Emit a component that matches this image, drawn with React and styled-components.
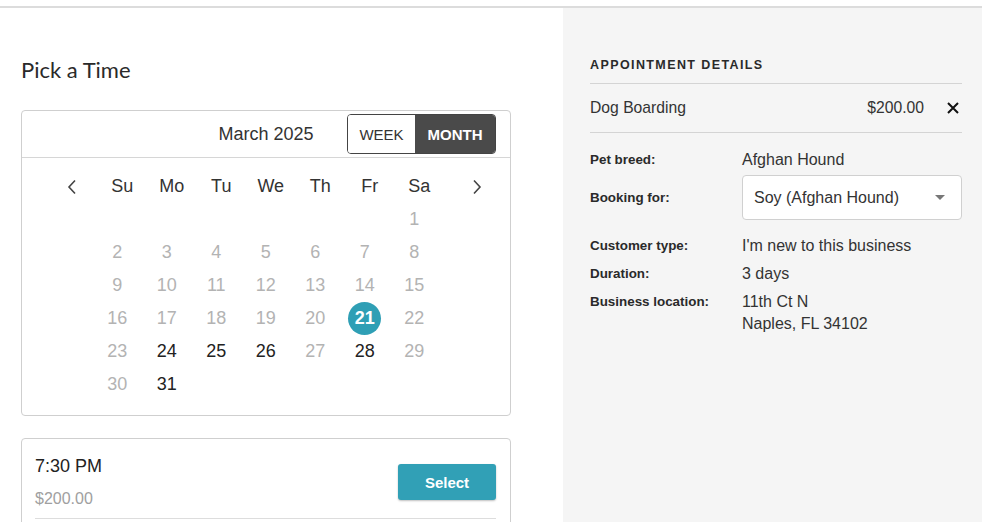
import React from 'react';
import styled, { createGlobalStyle } from 'styled-components';

const GlobalStyle = createGlobalStyle`
  html, body {
    margin: 0;
    padding: 0;
    background: #fff;
    font-family: 'Liberation Sans', Arial, sans-serif;
    color: #333;
  }
`;

const Page = styled.div`
  padding-top: 6px;
  height: 522px;
  box-sizing: border-box;
  overflow: hidden;
`;

const Shell = styled.div`
  display: grid;
  grid-template-columns: 563px 1fr;
  border-top: 2px solid #dcdcdc;
  height: 100%;
`;

const Main = styled.section`
  padding: 48px 52px 0 21px;
  overflow: hidden;
`;

const Title = styled.h1`
  margin: 0 0 26px;
  font-family: Lato, 'Open Sans', sans-serif;
  font-weight: 400;
  font-size: 22px;
  line-height: 28px;
  color: #2a2a2a;
`;

const Calendar = styled.div`
  border: 1px solid #cfcfcf;
  border-radius: 4px;
`;

const CalHeader = styled.div`
  position: relative;
  height: 46px;
  display: flex;
  align-items: center;
  justify-content: center;
  border-bottom: 1px solid #d6d6d6;
`;

const MonthLabel = styled.div`
  font-size: 18px;
  color: #333;
`;

const Toggle = styled.div`
  position: absolute;
  right: 14px;
  top: 3px;
  display: flex;
  height: 40px;
  box-sizing: border-box;
  border: 1px solid #444;
  border-radius: 4px;
  overflow: hidden;
`;

const ToggleBtn = styled.div`
  width: ${(p) => p.$w}px;
  display: flex;
  align-items: center;
  justify-content: center;
  font-size: 15px;
  font-weight: ${(p) => (p.$active ? 700 : 400)};
  color: ${(p) => (p.$active ? '#fff' : '#333')};
  background: ${(p) => (p.$active ? '#4a4a4a' : '#fff')};
`;

const Grid = styled.div`
  display: grid;
  grid-template-columns: repeat(9, 49.5px);
  grid-auto-rows: 33px;
  padding: 12px 0 14px 21px;
`;

const Cell = styled.div`
  display: flex;
  align-items: center;
  justify-content: center;
  font-size: 18px;
  color: ${(p) => (p.$muted ? '#b3b3b3' : '#222')};
`;

const WeekdayCell = styled(Cell)`
  padding-left: 10px;
  color: #333;
`;

const Nav = styled.div`
  display: flex;
  align-items: center;
  justify-content: ${(p) => (p.$next ? 'flex-end' : 'center')};
  padding-left: ${(p) => (p.$next ? '0' : '8px')};
  padding-right: ${(p) => (p.$next ? '7px' : '0')};
  color: #444;
`;

const Selected = styled.span`
  width: 33px;
  height: 33px;
  border-radius: 50%;
  background: #2f9fb5;
  color: #fff;
  font-weight: 700;
  display: flex;
  align-items: center;
  justify-content: center;
`;

const SlotCard = styled.div`
  margin-top: 22px;
  border: 1px solid #cfcfcf;
  border-radius: 4px;
  padding: 17px 14px 0 13px;
  height: 120px;
`;

const SlotRow = styled.div`
  display: flex;
  align-items: center;
  justify-content: space-between;
  padding-bottom: 10px;
  border-bottom: 1px solid #ddd;
`;

const SlotTime = styled.div`
  font-size: 18px;
  line-height: 20px;
  color: #222;
`;

const SlotPrice = styled.div`
  margin-top: 14px;
  font-size: 16px;
  line-height: 18px;
  color: #a0a0a0;
`;

const SelectButton = styled.button`
  width: 98px;
  height: 36px;
  border: none;
  border-radius: 3px;
  background: #31a0b6;
  color: #fff;
  font-family: inherit;
  font-size: 15px;
  font-weight: 700;
  box-shadow: 0 1px 2px rgba(0, 0, 0, 0.25);
`;

const Aside = styled.aside`
  background: #f5f5f5;
  padding: 49px 20px 0 27px;
`;

const AsideTitle = styled.h2`
  margin: 0;
  padding-bottom: 10px;
  border-bottom: 1px solid #d4d4d4;
  font-size: 12.5px;
  line-height: 16px;
  font-weight: 700;
  letter-spacing: 1.4px;
  color: #2a2a2a;
`;

const ServiceRow = styled.div`
  height: 48px;
  display: flex;
  align-items: center;
  border-bottom: 1px solid #d4d4d4;
  font-size: 15.7px;
  color: #333;
`;

const ServiceName = styled.span`
  flex: 1;
`;

const Close = styled.span`
  margin-left: 23px;
  margin-right: 3px;
  display: flex;
  color: #111;
`;

const Details = styled.div`
  padding-top: 16px;
`;

const DetailRow = styled.div`
  display: grid;
  grid-template-columns: 152px 1fr;
  align-items: ${(p) => (p.$center ? 'center' : 'start')};
  margin-top: ${(p) => p.$gap || 0}px;
`;

const Label = styled.div`
  font-size: 13.4px;
  font-weight: 700;
  line-height: 22px;
  color: #2a2a2a;
`;

const Value = styled.div`
  font-size: 16px;
  line-height: 22px;
  color: #333;
`;

const SelectBox = styled.div`
  height: 45px;
  box-sizing: border-box;
  background: #fff;
  border: 1px solid #d0d0d0;
  border-radius: 4px;
  display: flex;
  align-items: center;
  justify-content: space-between;
  padding: 0 16px 0 11px;
  font-size: 16px;
  color: #333;
`;

const Chevron = ({ dir }) => (
  <svg width='10' height='16' viewBox='0 0 10 16'>
    <polyline
      points={dir === 'left' ? '8,1.5 2,8 8,14.5' : '2,1.5 8,8 2,14.5'}
      fill='none'
      stroke='currentColor'
      strokeWidth='1.6'
    />
  </svg>
);

const weekdays = ['Su', 'Mo', 'Tu', 'We', 'Th', 'Fr', 'Sa'];
const openDays = [21, 24, 25, 26, 28, 31];

const days = [];
for (let i = 0; i < 6; i++) days.push(null);
for (let d = 1; d <= 31; d++) days.push(d);

const App = () => {
  return (
    <Page>
      <GlobalStyle />
      <Shell>
        <Main>
          <Title>Pick a Time</Title>
          <Calendar>
            <CalHeader>
              <MonthLabel>March 2025</MonthLabel>
              <Toggle>
                <ToggleBtn $w={67}>WEEK</ToggleBtn>
                <ToggleBtn $w={80} $active>
                  MONTH
                </ToggleBtn>
              </Toggle>
            </CalHeader>
            <Grid>
              <Nav>
                <Chevron dir='left' />
              </Nav>
              {weekdays.map((w) => (
                <WeekdayCell key={w}>{w}</WeekdayCell>
              ))}
              <Nav $next>
                <Chevron dir='right' />
              </Nav>
              {days.map((d, i) => {
                const col = (i % 7) + 2;
                const row = Math.floor(i / 7) + 2;
                return (
                  <Cell
                    key={i}
                    style={{ gridColumn: col, gridRow: row }}
                    $muted={!openDays.includes(d)}
                  >
                    {d === 21 ? <Selected>21</Selected> : d}
                  </Cell>
                );
              })}
            </Grid>
          </Calendar>
          <SlotCard>
            <SlotRow>
              <div>
                <SlotTime>7:30 PM</SlotTime>
                <SlotPrice>$200.00</SlotPrice>
              </div>
              <SelectButton>Select</SelectButton>
            </SlotRow>
          </SlotCard>
        </Main>
        <Aside>
          <AsideTitle>APPOINTMENT DETAILS</AsideTitle>
          <ServiceRow>
            <ServiceName>Dog Boarding</ServiceName>
            <span>$200.00</span>
            <Close>
              <svg width='12' height='12' viewBox='0 0 12 12'>
                <path d='M1 1 L11 11 M11 1 L1 11' stroke='currentColor' strokeWidth='2' />
              </svg>
            </Close>
          </ServiceRow>
          <Details>
            <DetailRow $center>
              <Label>Pet breed:</Label>
              <Value>Afghan Hound</Value>
            </DetailRow>
            <DetailRow $center $gap={4}>
              <Label>Booking for:</Label>
              <SelectBox>
                <span>Soy (Afghan Hound)</span>
                <svg width='10' height='5' viewBox='0 0 10 5'>
                  <path d='M0 0 L10 0 L5 5 Z' fill='#777' />
                </svg>
              </SelectBox>
            </DetailRow>
            <DetailRow $gap={15}>
              <Label>Customer type:</Label>
              <Value>I'm new to this business</Value>
            </DetailRow>
            <DetailRow $gap={6}>
              <Label>Duration:</Label>
              <Value>3 days</Value>
            </DetailRow>
            <DetailRow $gap={6}>
              <Label>Business location:</Label>
              <Value>
                11th Ct N
                <br />
                Naples, FL 34102
              </Value>
            </DetailRow>
          </Details>
        </Aside>
      </Shell>
    </Page>
  );
};

export default App;
